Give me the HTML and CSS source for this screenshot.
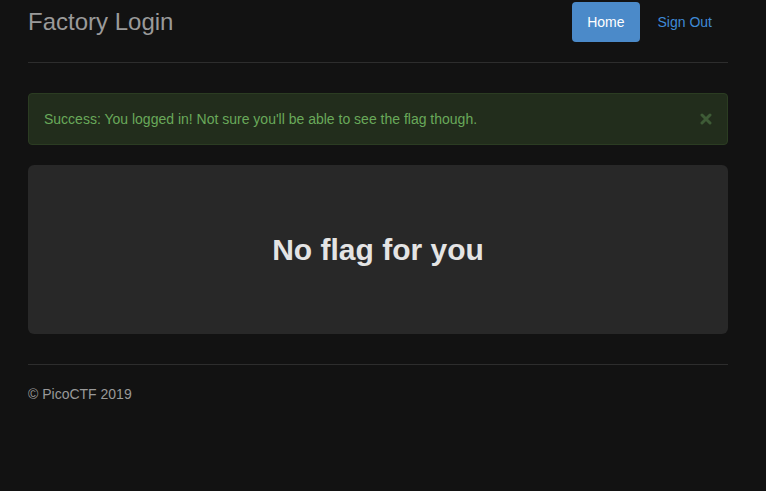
FILE: index.html
```html
<!DOCTYPE html>
<html>
<head>
<meta charset="utf-8">
<link rel="stylesheet" href="styles.css">
</head>
<body>
<div class="container">
  <div class="header">
    <h3 class="brand">Factory Login</h3>
    <ul class="nav">
      <li><a class="pill active" href="#">Home</a></li>
      <li><a class="pill" href="#">Sign Out</a></li>
    </ul>
  </div>
  <div class="alert">
    <span>Success: You logged in! Not sure you'll be able to see the flag though.</span>
    <span class="close"><svg width="12" height="12" viewBox="0 0 12 12"><path d="M2 2 L10 10 M10 2 L2 10" stroke="currentColor" stroke-width="3" stroke-linecap="round"/></svg></span>
  </div>
  <div class="jumbotron">
    <h1>No flag for you</h1>
  </div>
  <div class="footer">© PicoCTF 2019</div>
</div>
</body>
</html>
```
FILE: styles.css
```css
html, body {
  margin: 0;
  padding: 0;
  background: #121212;
  font-family: "Liberation Sans", Arial, sans-serif;
  font-size: 14px;
  line-height: 20px;
  color: #999;
}
.container {
  width: 700px;
  padding: 2px 0 0 28px;
}
.header {
  display: flex;
  justify-content: space-between;
  align-items: flex-start;
  padding-bottom: 20px;
  border-bottom: 1px solid #2d2d2d;
}
.brand {
  margin: 0;
  font-size: 24px;
  font-weight: normal;
  line-height: 40px;
  color: #9a9a9a;
}
.nav {
  display: flex;
  list-style: none;
  margin: 0 1px 0 0;
  padding: 0;
}
.nav li { margin-left: 3px; }
.pill {
  display: block;
  padding: 10px 15px;
  line-height: 20px;
  border-radius: 4px;
  color: #3f8ad6;
  text-decoration: none;
}
.pill.active {
  background: #4b8ac9;
  color: #fff;
}
.alert {
  margin-top: 30px;
  margin-bottom: 20px;
  padding: 15px;
  background: #222d1c;
  border: 1px solid #2b3c22;
  border-radius: 4px;
  color: #69a95a;
  display: flex;
  justify-content: space-between;
  align-items: center;
}
.close {
  color: #3e5b36;
  display: flex;
}
.jumbotron {
  background: #282828;
  border-radius: 6px;
  height: 169px;
  display: flex;
  align-items: center;
  justify-content: center;
}
.jumbotron h1 {
  margin: 0;
  font-size: 30px;
  line-height: 33px;
  font-weight: bold;
  color: #e4e4e4;
}
.footer {
  margin-top: 30px;
  padding-top: 19px;
  border-top: 1px solid #2d2d2d;
  color: #999;
}
```
